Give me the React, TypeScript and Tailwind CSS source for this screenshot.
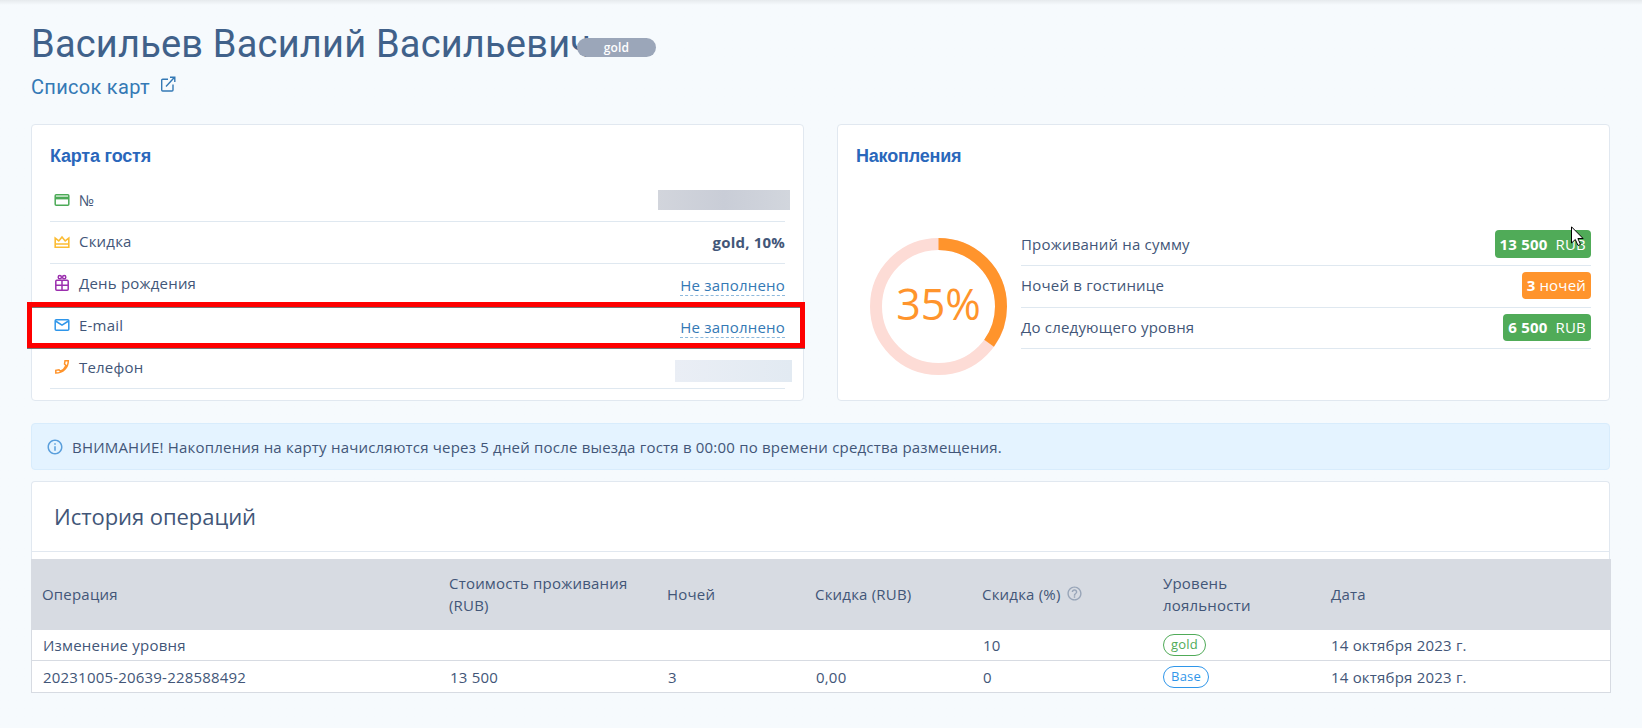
import type { ReactNode } from "react";
import { MdInfoOutline, MdHelpOutline } from "react-icons/md";

const CardIcon = () => (
  <svg width="16" height="16" viewBox="0 0 16 16" fill="none" stroke="#4caa57" strokeWidth="1.5">
    <rect x="1.2" y="2.7" width="13.6" height="10.6" rx="1" />
    <path d="M1 6h14" strokeWidth="2.8" />
  </svg>
);

const CrownIcon = () => (
  <svg width="16" height="16" viewBox="0 0 16 16" fill="none" stroke="#fbbc34" strokeWidth="1.6">
    <path d="M1.2 13.2V4.2L4.8 7 8 3l3.2 4 3.6-2.8v9zM1 10h14" />
  </svg>
);

const GiftIcon = () => (
  <svg width="16" height="18" viewBox="0 0 16 18" fill="none" stroke="#9b2fae" strokeWidth="1.5">
    <rect x="1.800" y="6.3" width="12.400" height="10" rx="1" />
    <path d="M2 11.3h12M8 6v10" />
    <circle cx="5.8" cy="3.2" r="1.6" />
    <circle cx="10.2" cy="3.2" r="1.6" />
  </svg>
);

const MailIcon = () => (
  <svg width="16" height="16" viewBox="0 0 16 16" fill="none" stroke="#2f96ea" strokeWidth="1.5">
    <rect x="1.2" y="2.7" width="13.6" height="10.6" rx="1" />
    <path d="M1.500 4 8 8.200 14.500 4" />
  </svg>
);

const PhoneIcon = () => (
  <svg width="16" height="16" viewBox="0 0 16 16" fill="none" stroke="#ff942c" strokeWidth="1.5">
    <path d="M11 1.800h3.300c0 6.900-5.300 12.300-12.500 12.300v-2.800l3.200-.500 1.300 1.500c2.600-1.100 4.600-3.100 5.700-5.800L10.500 5z" />
  </svg>
);

const LinkIcon = () => (
  <svg width="16" height="16" viewBox="0 0 16 16" fill="none" stroke="#3479b5" strokeWidth="1.4">
    <path d="M8 3.200H2.700a1 1 0 0 0-1 1V14a1 1 0 0 0 1 1H12a1 1 0 0 0 1-1V8.500M6 10.500 14.300 1.500M10 1.200h4.800V6" />
  </svg>
);

const Row = ({ icon, label, children }: { icon?: ReactNode; label: string; children?: ReactNode }) => (
  <div className="flex h-[41.800px] items-center border-b border-[#dfe8f0]">
    {icon && <span className="mb-px ml-1 mr-[9px] flex w-4 justify-center">{icon}</span>}
    <span className="mb-px grow">{label}</span>
    {children}
  </div>
);

const Empty = () => (
  <span className="mt-1 border-b border-dashed border-[#8db9dd] leading-[19px] text-[#3479b5]">
    Не заполнено
  </span>
);

const columns = "grid grid-cols-[407px_218px_148px_167px_181px_168px_1fr] items-center";

const App = () => {
  return (
    <div className="h-[728px] w-[1642px] overflow-hidden bg-[#f6fafd] bg-linear-to-b from-[#e6eaed] to-[#f6fafd] to-[5px] px-[31px] font-['Open_Sans',sans-serif] text-[15px] tracking-[0.2px] text-[#425678]">
      <header className="h-[124px] pt-[18px]">
        <div className="flex h-[52px] items-center">
          <h1 className="w-[546px] whitespace-nowrap font-['Roboto',sans-serif] text-[38px] tracking-[0.2px] text-[#40618a]">
            Васильев Василий Васильевич
          </h1>
          <span className="mt-[7px] flex h-[19px] w-[79px] items-center justify-center rounded-full bg-[#9ba6b9] text-[12px] font-semibold text-white">
            gold
          </span>
        </div>
        <div className="flex gap-[10px] font-['Roboto',sans-serif] text-[20px] leading-[34px] tracking-[0.3px] text-[#3479b5]">
          Список карт
          <span className="mt-[6px]">
            <LinkIcon />
          </span>
        </div>
      </header>

      <div className="flex gap-[33px]">
        <section className="h-[277px] w-[773px] rounded border border-[#e1e8f0] bg-white px-[18px]">
          <h2 className="h-[55px] pt-[18px] font-['Liberation_Sans',sans-serif] text-[18px] font-bold tracking-[-0.2px] text-[#2a67bb]">
            Карта гостя
          </h2>
          <div className="relative">
            <Row icon={<CardIcon />} label="№">
              <span className="-mr-[5px] h-5 w-[132px] bg-linear-to-r from-[#d2d5dc] via-[#c9cdd7] to-[#d2d6dd]" />
            </Row>
            <Row icon={<CrownIcon />} label="Скидка">
              <b>gold, 10%</b>
            </Row>
            <Row icon={<GiftIcon />} label="День рождения">
              <Empty />
            </Row>
            <Row icon={<MailIcon />} label="E-mail">
              <Empty />
            </Row>
            <Row icon={<PhoneIcon />} label="Телефон">
              <span className="-mr-[7px] mt-[6px] h-[22px] w-[117px] bg-linear-to-r from-[#eaeef5] to-[#e2eaf2]" />
            </Row>
            <div className="absolute -left-[23px] top-[122px] h-[46px] w-[778px] border-[5px] border-[#fe0000] shadow-[0_1px_0_#777,inset_0_1px_0_#777]" />
          </div>
        </section>

        <section className="h-[277px] w-[773px] rounded border border-[#e1e8f0] bg-white px-[18px]">
          <h2 className="h-[99px] pt-[18px] font-['Liberation_Sans',sans-serif] text-[18px] font-bold tracking-[-0.2px] text-[#2a67bb]">
            Накопления
          </h2>
          <div className="flex">
            <div className="ml-[14px] mt-[14px] h-[137px] w-[137px]">
              <svg width="137" height="137" viewBox="0 0 137 137" fill="none" strokeWidth="12">
                <circle cx="68.5" cy="68.5" r="62.5" stroke="#fddcd6" />
                <circle
                  cx="68.5"
                  cy="68.5"
                  r="62.5"
                  stroke="#ff942c"
                  pathLength="100"
                  strokeDasharray="35 65"
                  transform="rotate(-90 68.5 68.5)"
                />
                <text x="68.5" y="82" textAnchor="middle" strokeWidth="0" fill="#ff942c" fontSize="43" letterSpacing="0">
                  35%
                </text>
              </svg>
            </div>
            <div className="relative ml-[14px] grow">
              <Row label="Проживаний на сумму">
                <span className="mb-px flex h-7 items-center gap-2 rounded bg-[#50ab58] px-[5px] text-white">
                  <b>13 500</b> RUB
                </span>
              </Row>
              <Row label="Ночей в гостинице">
                <span className="mb-px flex h-[27px] items-center gap-1 rounded bg-[#ff942c] px-[5px] text-white">
                  <b>3</b> ночей
                </span>
              </Row>
              <Row label="До следующего уровня">
                <span className="mb-px flex h-[27px] items-center gap-2 rounded bg-[#50ab58] px-[5px] text-white">
                  <b>6 500</b> RUB
                </span>
              </Row>
              <svg className="absolute right-[7px] top-[2px]" width="13" height="21" viewBox="0 0 13 21">
                <path d="M.5.800V17l3.800-3.500 2.700 6 2.500-1.100-2.600-5.900h5.200z" fill="#fff" stroke="#000" />
              </svg>
            </div>
          </div>
        </section>
      </div>

      <div className="mt-[22px] flex h-[47px] w-[1579px] items-center gap-2 rounded border border-[#d8ecfc] bg-[#e4f3ff] pl-[14px] pt-px">
        <MdInfoOutline size={18} color="#5a9fdc" />
        ВНИМАНИЕ! Накопления на карту начисляются через 5 дней после выезда гостя в 00:00 по времени средства размещения.
      </div>

      <section className="mt-[11px] h-[212px] w-[1580px]">
        <div className="mr-px h-[78px] rounded-t border border-b-0 border-[#e1e8f0] bg-white">
          <h2 className="h-[70px] border-b border-[#e1e8f0] pl-[22px] pt-[18px] text-[22px] tracking-[-0.05px]">
            История операций
          </h2>
        </div>
        <div className={`${columns} h-[71px] bg-[#d7dbe2] pb-[2px] pl-[11px] leading-[22px]`}>
          <span>Операция</span>
          <span>Стоимость проживания<br />(RUB)</span>
          <span>Ночей</span>
          <span>Скидка (RUB)</span>
          <span className="flex items-center gap-[5px]">
            Скидка (%) <MdHelpOutline size={17} color="#98a5b8" />
          </span>
          <span>Уровень<br />лояльности</span>
          <span>Дата</span>
        </div>
        <div className={`${columns} h-[31px] border-x border-b border-[#d7dbe2] bg-white pl-[11px]`}>
          <span>Изменение уровня</span>
          <span />
          <span />
          <span />
          <span>10</span>
          <span className="-ml-px flex h-[22px] w-[43px] items-center justify-center rounded-full border border-[#50ab58] text-[13px] text-[#50ab58]">
            gold
          </span>
          <span className="-ml-px">14 октября 2023 г.</span>
        </div>
        <div className={`${columns} h-8 border-x border-b border-[#d7dbe2] bg-white pl-[11px] pt-px`}>
          <span>20231005-20639-228588492</span>
          <span>13 500</span>
          <span>3</span>
          <span>0,00</span>
          <span>0</span>
          <span className="-ml-px flex h-[22px] w-[46px] items-center justify-center rounded-full border border-[#2f96ea] text-[13px] text-[#2f96ea]">
            Base
          </span>
          <span className="-ml-px">14 октября 2023 г.</span>
        </div>
      </section>
    </div>
  );
};

export default App;
